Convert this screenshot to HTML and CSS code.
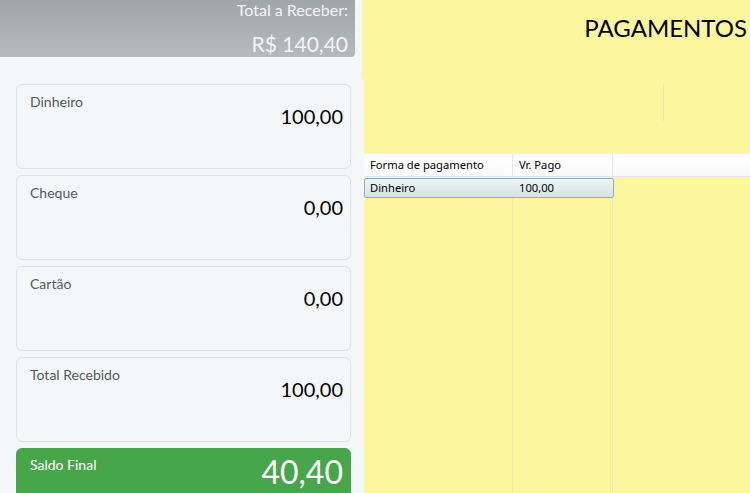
FILE: index.html
```html
<!DOCTYPE html>
<html lang="pt-BR">
<head>
<meta charset="utf-8">
<title>Pagamentos</title>
<link rel="stylesheet" href="styles.css">
</head>
<body>
<div class="screen">
  <aside class="left">
    <div class="total-head">
      <div class="total-label">Total a Receber:</div>
      <div class="total-value">R$ 140,40</div>
    </div>
    <div class="cards">
      <div class="card"><span class="card-label">Dinheiro</span><span class="card-value">100,00</span></div>
      <div class="card"><span class="card-label">Cheque</span><span class="card-value">0,00</span></div>
      <div class="card"><span class="card-label">Cartão</span><span class="card-value">0,00</span></div>
      <div class="card"><span class="card-label">Total Recebido</span><span class="card-value">100,00</span></div>
      <div class="card card-green"><span class="card-label">Saldo Final</span><span class="card-value">40,40</span></div>
    </div>
  </aside>
  <main class="right">
    <div class="title-bar"><h1 class="title">PAGAMENTOS</h1></div>
    <div class="lower">
      <div class="toolbar"><span class="tool-sep"></span></div>
      <div class="grid">
        <div class="grid-head">
          <div class="hcell c1">Forma de pagamento</div>
          <div class="hcell c2">Vr. Pago</div>
          <div class="hcell c3"></div>
        </div>
        <div class="grid-body">
          <div class="col-lines">
            <div class="cl c1"></div>
            <div class="cl c2"></div>
            <div class="cl c3"></div>
          </div>
          <div class="row selected">
            <div class="cell c1">Dinheiro</div>
            <div class="cell c2">100,00</div>
          </div>
        </div>
      </div>
    </div>
  </main>
</div>
</body>
</html>
```

FILE: styles.css
```css
* { box-sizing: border-box; }
html, body { margin: 0; padding: 0; }
body {
  width: 750px;
  height: 493px;
  overflow: hidden;
  font-family: Lato, "Open Sans", sans-serif;
  background: #f4f7f9;
}
.screen {
  display: flex;
  height: 493px;
  overflow: hidden;
}
.left {
  width: 362px;
  flex: none;
  background: #f4f7f9;
}
.total-head {
  width: 355px;
  height: 57px;
  background: linear-gradient(to bottom, #a0a7a9, #b5bbbc);
  border-bottom-right-radius: 4px;
  color: #f3f5f5;
  text-align: right;
  padding: 0 7px 0 0;
}
.total-label {
  font-size: 16px;
  line-height: 20px;
}
.total-value {
  font-size: 21px;
  line-height: 24px;
  margin-top: 12px;
}
.cards {
  display: flex;
  flex-direction: column;
  gap: 6px;
  margin: 27px 0 0 16px;
  width: 335px;
}
.card {
  height: 85px;
  border: 1px solid #dde2e5;
  border-radius: 6px;
  background: #f4f7f9;
  display: flex;
  flex-direction: column;
  padding: 9px 7px 0 13px;
  flex: none;
}
.card-label {
  font-size: 14px;
  line-height: 16px;
  color: #555a5c;
}
.card-value {
  align-self: flex-end;
  font-size: 20px;
  line-height: 24px;
  color: #000;
  margin-top: -6px;
}
.card-green {
  background: #47a64a;
  border-color: #47a64a;
  padding-top: 8px;
}
.card-green .card-label { color: #fff; }
.card-green .card-value {
  color: #fff;
  font-size: 32px;
  line-height: 34px;
  margin-top: -18px;
}
.right {
  flex: 1;
  display: flex;
  flex-direction: column;
}
.title-bar {
  height: 79px;
  background: #fcf69e;
  display: flex;
  justify-content: flex-end;
}
.title {
  margin: 14px 3px 0 0;
  font-weight: 400;
  font-size: 24px;
  line-height: 28px;
  color: #000;
}
.lower {
  flex: 1;
  margin-left: 2px;
  background: #fcf69e;
  display: flex;
  flex-direction: column;
}
.toolbar {
  height: 75px;
  padding: 5px 0 0 299px;
}
.tool-sep {
  display: block;
  width: 1px;
  height: 37px;
  background: #e9e6b8;
}
.grid {
  flex: 1;
  display: flex;
  flex-direction: column;
  font-family: "Noto Sans", "DejaVu Sans", sans-serif;
  font-size: 11.2px;
  color: #000;
}
.grid-head {
  display: flex;
  height: 23px;
  background: linear-gradient(to bottom, #ffffff, #fafafa);
  border-bottom: 1px solid #e4e4e4;
}
.c1 { width: 149px; }
.c2 { width: 100px; }
.c3 { flex: 1; }
.hcell {
  padding: 3px 0 0 6px;
  line-height: 16px;
  border-right: 1px solid #e6e6e6;
}
.hcell.c3 { border-right: none; }
.grid-body {
  flex: 1;
  position: relative;
  padding-top: 1px;
}
.col-lines {
  position: absolute;
  inset: 0;
  display: flex;
}
.cl { border-right: 1px solid #ede9b6; }
.cl.c3 { border-right: none; }
.row {
  position: relative;
  display: flex;
  width: 250px;
  height: 20px;
}
.row.selected {
  background: linear-gradient(to bottom, #eef4f3, #d5e3e4);
  border: 1px solid #89aed0;
  border-radius: 2px;
}
.cell {
  padding: 0 0 0 5px;
  line-height: 17px;
}
.row .c1 { width: 149px; }
.row .c2 { width: 99px; }
```
